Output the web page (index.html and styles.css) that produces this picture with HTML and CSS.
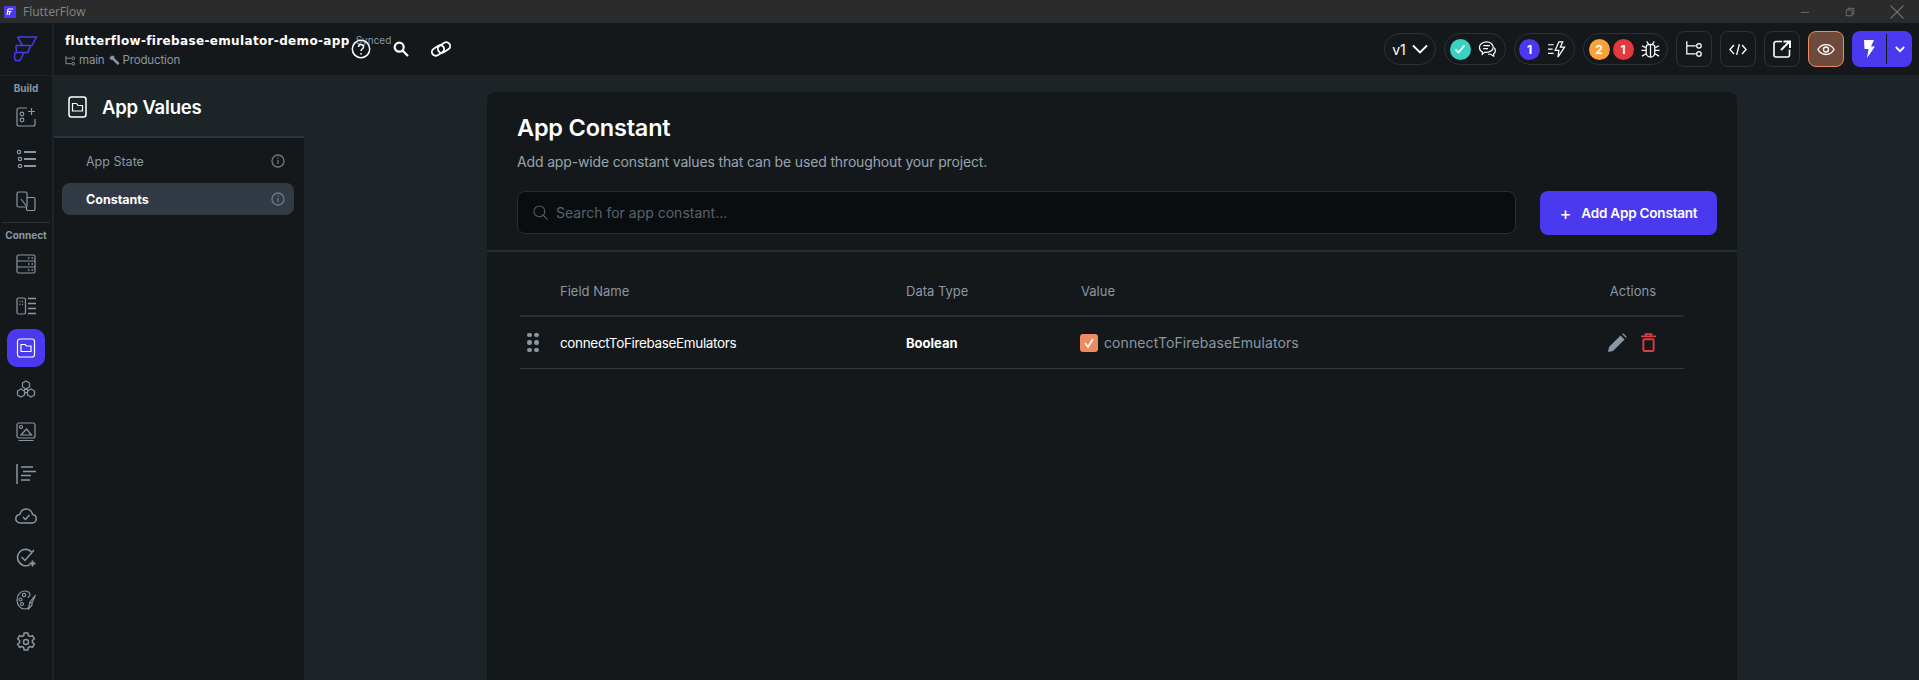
FILE: index.html
```html
<!DOCTYPE html>
<html lang="en">
<head>
  <meta charset="UTF-8">
  <title>FlutterFlow</title>
  <link rel="stylesheet" href="styles.css">
</head>
<body>
  <div class="titlebar">
    <svg class="app-mark" viewBox="0 0 12 12"><rect width="12" height="12" rx="1" fill="#4b39ef"/><path d="M4 3h5M3.500 5.500h4M4 3 3 9M6 5.500 5 9" stroke="#fff" stroke-width="1.200" fill="none"/></svg>
    <span class="app-name">FlutterFlow</span>
    <div class="window-btns">
      <svg viewBox="0 0 12 12"><path d="M1 6.500h10" stroke="#777" fill="none"/></svg>
      <svg viewBox="0 0 12 12"><path d="M1.500 3.500h7v7h-7zM3.500 3.500v-2h7v7h-2" stroke="#777" fill="none"/></svg>
      <svg class="close-x" viewBox="0 0 12 12"><path d="M.5.500l11 11M11.500.500l-11 11" stroke="#777" fill="none"/></svg>
    </div>
  </div>

  <header class="topbar">
    <div class="logo-cell">
      <svg viewBox="0 0 26 26" width="26" height="26" fill="none" stroke="#4b39ef" stroke-width="1.500" stroke-linejoin="round"><path d="M5.500 1h19l-4.500 8.500h-9.500l-5-8.500M4 9.500h14.500l-2.500 7H4.500l-.5-7M3 16.500h9l-4 8H3.500l-1-3 .5-5"/></svg>
    </div>
    <div class="project">
      <div class="project-name-row">
        <span class="project-name">flutterflow-firebase-emulator-demo-app</span>
        <span class="synced">Synced</span>
      </div>
      <div class="project-meta">
        <svg viewBox="0 0 12 12" width="11" height="11" fill="none" stroke="#8b97a2"><path d="M1 1v8.500h6M1 3.500h6"/><circle cx="9" cy="3.500" r="1.500"/><circle cx="9" cy="9.500" r="1.500"/></svg>
        <span>main</span>
        <svg class="wrench" viewBox="0 0 12 12" width="11" height="11"><path d="M.5 3 3 .5l2.500.500.500 2.500 5.500 5.500-2 2L4 5.500 1.500 5z" fill="#8b97a2"/></svg>
        <span>Production</span>
      </div>
    </div>
    <div class="project-tools">
      <svg viewBox="0 0 20 20" width="20" height="20" fill="none" stroke="#fff" stroke-width="1.500"><circle cx="10" cy="10" r="8.700"/><path d="M7.500 8c0-3.200 5-3.200 5 0 0 2-2.500 2-2.500 4"/><path d="M10 14v1.500"/></svg>
      <svg viewBox="0 0 16 16" width="16" height="16" fill="none" stroke="#fff" stroke-width="2.200"><circle cx="6.200" cy="6.200" r="4.500"/><path d="M9.500 9.500l5.500 5.500"/></svg>
      <svg viewBox="0 0 20 20" width="20" height="20" fill="none" stroke="#fff" stroke-width="1.800"><rect x=".5" y="7.700" width="13" height="7.600" rx="3.800" transform="rotate(-32 7 11.500)"/><rect x="6.500" y="4.700" width="13" height="7.600" rx="3.800" transform="rotate(-32 13 8.500)"/></svg>
    </div>

    <div class="top-actions">
      <div class="pill pill-version">v1
        <svg viewBox="0 0 16 10" width="16" height="10" fill="none" stroke="#fff" stroke-width="1.800"><path d="M1 1.500l7 7 7-7"/></svg>
      </div>
      <div class="pill pill-sync">
        <span class="dot dot-teal"><svg viewBox="0 0 12 12" width="12" height="12" fill="none" stroke="#fff" stroke-width="1.800"><path d="M1.500 6.500l3 3 6-7"/></svg></span>
        <svg viewBox="0 0 20 20" width="19" height="19" fill="none" stroke="#fff" stroke-width="1.300"><path d="M9 2c4 0 7 2.500 7 5.500S13 13 9 13H7l-2.500 2v-2.500C2.500 11.500 1.500 9.500 1.500 7.500 1.500 4.500 5 2 9 2z"/><path d="M5.500 6h7M5.500 9h5"/><path d="M17 8c1.500 1.500 2 5-.5 6.500V17l-3-2h-3"/></svg>
      </div>
      <div class="pill pill-actions">
        <span class="dot dot-blue">1</span>
        <svg viewBox="0 0 20 20" width="19" height="19" fill="none" stroke="#fff" stroke-width="1.300"><path d="M1 5h6M1 9.500h5M1 14h6"/><path d="M12.500 2 8.500 11h4l-1 7 7-10.500h-4.500l2.500-5.500z"/></svg>
      </div>
      <div class="pill pill-bugs">
        <span class="dot dot-orange">2</span>
        <span class="dot dot-red">1</span>
        <svg viewBox="0 0 20 20" width="19" height="19" fill="none" stroke="#fff" stroke-width="1.300"><path d="M5.500 7c0-1.500 2-2.500 4.500-2.500S14.500 5.500 14.500 7v6.500c0 2.500-2 4.500-4.500 4.500s-4.500-2-4.500-4.500z"/><path d="M10 5v13M6 1.500l2 3M14 1.500l-2 3M1 6l4 2M19 6l-4 2M.5 11h5M19.500 11h-5M1 17l4.500-2.500M19 17l-4.500-2.500"/></svg>
      </div>
      <div class="square-btn">
        <svg viewBox="0 0 20 20" width="18" height="18" fill="none" stroke="#fff" stroke-width="1.400"><path d="M2 1.500v14h10M2 6.500h10"/><circle cx="15.500" cy="6.500" r="2.500"/><circle cx="15.500" cy="15.500" r="2.500"/></svg>
      </div>
      <div class="square-btn">
        <svg viewBox="0 0 20 14" width="18" height="13" fill="none" stroke="#fff" stroke-width="1.500"><path d="M5.500 2 1 7l4.500 5M14.500 2 19 7l-4.500 5M11.500 1l-3 12"/></svg>
      </div>
      <div class="square-btn">
        <svg viewBox="0 0 18 18" width="18" height="18" fill="none" stroke="#fff" stroke-width="1.600"><path d="M9 1.500H3a2 2 0 0 0-2 2V15a2 2 0 0 0 2 2h11.500a2 2 0 0 0 2-2V9.500"/><path d="M8 10 16 2" stroke-width="2"/><path d="M10.500 1.500h6.500V8" stroke-width="2"/></svg>
      </div>
      <div class="square-btn square-preview">
        <svg viewBox="0 0 20 14" width="18" height="13" fill="none" stroke="#fff" stroke-width="1.500"><path d="M1 7c2-3.500 5-5.500 9-5.500s7 2 9 5.500c-2 3.500-5 5.500-9 5.500S3 10.500 1 7z"/><circle cx="10" cy="7" r="2.800"/></svg>
      </div>
      <div class="run-btn">
        <span class="run-main"><svg viewBox="0 0 12 18" width="12" height="18"><path d="M1 0h10L8 6.500h4L4 18l1.500-9H1.500z" fill="#fff"/></svg></span>
        <span class="run-caret"><svg viewBox="0 0 12 8" width="10" height="7" fill="none" stroke="#fff" stroke-width="2.200"><path d="M1 1l5 5 5-5"/></svg></span>
      </div>
    </div>
  </header>

  <div class="workspace">
    <nav class="rail">
      <div class="rail-label">Build</div>
      <div class="rail-item">
        <svg viewBox="0 0 20 20"><path d="M11 1H3a2 2 0 0 0-2 2v14a2 2 0 0 0 2 2h14a2 2 0 0 0 2-2v-5M15.500 1v7M12 4.500h7"/><circle cx="6" cy="7" r="1.800"/><circle cx="6" cy="13" r="1.800"/></svg>
      </div>
      <div class="rail-item">
        <svg viewBox="0 0 20 20"><circle cx="3" cy="3" r="1.700"/><circle cx="4" cy="10" r="1.700"/><circle cx="4" cy="17" r="1.700"/><path d="M8 3h12M8 10h12M8 17h12" stroke-width="1.800"/></svg>
      </div>
      <div class="rail-item">
        <svg viewBox="0 0 20 20"><rect x="1" y="1" width="10" height="15" rx="1.500"/><path d="M11 6.500h6.500A1.500 1.500 0 0 1 19 8v10a1.500 1.500 0 0 1-1.500 1.500H12a1.500 1.500 0 0 1-1.500-1.500v-2M5 8l5 6.500"/></svg>
      </div>
      <div class="rail-rule"></div>
      <div class="rail-label">Connect</div>
      <div class="rail-item">
        <svg viewBox="0 0 20 20"><rect x="1" y="1" width="18" height="18" rx="1.500"/><path d="M1 7h18M1 13h18"/><path d="M12 4h1.500M15.500 4H17M12 10h1.500M15.500 10H17M12 16h1.500M15.500 16H17" stroke-width="1.600"/></svg>
      </div>
      <div class="rail-item">
        <svg viewBox="0 0 20 20"><rect x="1" y="2" width="8.500" height="16" rx="1.500"/><path d="M3.500 5.500h1M6 5.500h1M3.500 8.500h1M6 8.500h1M12 2.500h8M12 7.500h8M12 12.500h8M12 17.500h8" stroke-width="1.600"/></svg>
      </div>
      <div class="rail-item rail-item-active">
        <svg viewBox="0 0 20 20"><rect x="1.500" y="1" width="17" height="18" rx="2.500"/><path d="M5 6.500h4l1.500 1.500H15v5.500H5z"/></svg>
      </div>
      <div class="rail-item">
        <svg viewBox="0 0 20 20"><path d="M10 1l3.500 2v4L10 9 6.500 7V3zM5 9l3.500 2v4L5 17l-3.500-2v-4zM15 9l3.500 2v4L15 17l-3.500-2v-4z"/><circle cx="10" cy="11" r="1.800"/></svg>
      </div>
      <div class="rail-item">
        <svg viewBox="0 0 20 20"><rect x="1" y="1" width="18" height="15" rx="2"/><circle cx="5" cy="5" r="1.500"/><path d="M5 13l5.500-6 5 6zM2.500 18.500h15" /></svg>
      </div>
      <div class="rail-item">
        <svg viewBox="0 0 20 20"><path d="M1 0v20M5 3h12M7 7.500h13M5 11.500h10M5 16h9" stroke-width="1.500"/></svg>
      </div>
      <div class="rail-item">
        <svg viewBox="0 0 22 16" class="wide"><path d="M5.500 15C2.500 15 .8 13 .8 10.800c0-2.200 1.700-4 4-4.200C5.800 3 8.300 1 11 1c3.500 0 6 2.500 6.500 5.500 2.200.2 3.700 2 3.700 4.200 0 2.400-1.700 4.300-4.200 4.300z" stroke-width="1.500"/><path d="M8 9l2.500 2.500L14.500 7" stroke-width="1.500"/></svg>
      </div>
      <div class="rail-item">
        <svg viewBox="0 0 20 20"><path d="M15.500 4C14 2.200 12 1.200 9.500 1.200A8.300 8.300 0 1 0 14 16.700" stroke-width="1.500"/><path d="M5.500 9l3.500 3.500L18 2" stroke-width="1.500"/><path d="M16.500 12.500v6M13.500 15.500h6" stroke-width="1.800"/></svg>
      </div>
      <div class="rail-item">
        <svg viewBox="0 0 20 20"><path d="M13 17c-1 1.500-2.500 2-4.500 2C4.500 19 1 15 1 10S4.500 1 8.500 1c3.500 0 6 2 5.500 4-.500 1.500-2 1.500-2 3" stroke-width="1.200"/><circle cx="8" cy="5" r="1.700"/><circle cx="4.500" cy="9.500" r="1.500"/><circle cx="6" cy="14" r="1.500"/><path d="M19.500 5 16 13l-2-1zM14 12l-1.500 7 3.500-4 0-2" stroke-width="1.200"/></svg>
      </div>
      <div class="rail-item">
        <svg viewBox="0 0 20 20"><path d="M8.200 1h3.600l.5 2.500 1.700 1 2.500-.8 1.800 3.100-1.900 1.700v2l1.900 1.700-1.800 3.100-2.500-.8-1.700 1-.5 2.500H8.200l-.5-2.500-1.700-1-2.500.8-1.800-3.100 1.900-1.700v-2L1.700 6.800l1.800-3.100 2.500.8 1.700-1z" stroke-width="1.500"/><circle cx="10" cy="10" r="2.500" stroke-width="1.500"/></svg>
      </div>
    </nav>

    <aside class="sidebar">
      <div class="sidebar-head">
        <svg viewBox="0 0 19 22" width="19" height="22" fill="none" stroke="#fff" stroke-width="1.500"><rect x="1" y="1" width="17" height="20" rx="2.500"/><path d="M4.500 7.500h4L10 9.500h4.500v5.500h-10z" stroke-width="1.200"/></svg>
        <span>App Values</span>
      </div>
      <div class="side-link">App State
        <svg class="info" viewBox="0 0 14 14"><circle cx="7" cy="7" r="6"/><path d="M7 6v4M7 3.500v1.300"/></svg>
      </div>
      <div class="side-link side-link-active">Constants
        <svg class="info" viewBox="0 0 14 14"><circle cx="7" cy="7" r="6"/><path d="M7 6v4M7 3.500v1.300"/></svg>
      </div>
    </aside>

    <main class="main">
      <section class="card">
        <div class="card-top">
          <h1>App Constant</h1>
          <p>Add app-wide constant values that can be used throughout your project.</p>
          <div class="search-row">
            <div class="search">
              <svg viewBox="0 0 16 16" width="15" height="15" fill="none" stroke="#57636c" stroke-width="1.100"><circle cx="6.800" cy="6.800" r="5.800"/><path d="M11 11l4.500 4.500"/></svg>
              <span>Search for app constant...</span>
            </div>
            <div class="add-btn"><span class="plus">+</span>Add App Constant</div>
          </div>
        </div>
        <div class="table">
          <div class="row row-head">
            <span></span>
            <span>Field Name</span>
            <span>Data Type</span>
            <span>Value</span>
            <span class="actions-head">Actions</span>
          </div>
          <div class="row row-body">
            <span class="grip"><i></i><i></i><i></i><i></i><i></i><i></i></span>
            <span class="field-name">connectToFirebaseEmulators</span>
            <span class="data-type">Boolean</span>
            <span class="value">
              <span class="check"><svg viewBox="0 0 12 12" width="12" height="12" fill="none" stroke="#fff" stroke-width="1.600"><path d="M2 6l3 4 5-8"/></svg></span>
              connectToFirebaseEmulators
            </span>
            <span class="row-actions">
              <svg viewBox="0 0 20 20" width="20" height="20"><path d="M1 19l1-5L13.500 2.500l4 4L6 18zM15 1l1.500-.500 3 3L19 5z" fill="#8b97a2"/></svg>
              <svg viewBox="0 0 16 20" width="15" height="19" fill="none" stroke="#e0393e" stroke-width="2"><path d="M0 3.500h16M5 3.500V1h6v2.500"/><rect x="2.500" y="6.500" width="11" height="12.500" rx="1"/></svg>
            </span>
          </div>
        </div>
      </section>
    </main>
  </div>
</body>
</html>
```

FILE: styles.css
```css
* {
  box-sizing: border-box;
}

html, body {
  margin: 0;
  height: 100%;
  overflow: hidden;
}

body {
  display: flex;
  flex-direction: column;
  background: #1d2428;
  color: #fff;
  font-family: 'Inter', 'Liberation Sans', sans-serif;
}

/* window chrome */
.titlebar {
  height: 23px;
  background: #2b2b2b;
  display: flex;
  align-items: center;
  padding-left: 4px;
  flex-shrink: 0;
}

.app-mark {
  width: 12px;
  height: 12px;
}

.app-name {
  margin-left: 7px;
  font-family: 'Open Sans', sans-serif;
  font-size: 12px;
  color: #858585;
}

.window-btns {
  margin-left: auto;
  display: flex;
  align-items: center;
  gap: 35px;
  padding-right: 15px;
}

.window-btns svg {
  width: 10px;
  height: 10px;
}

.window-btns .close-x {
  width: 14px;
  height: 14px;
}

/* top header */
.topbar {
  height: 53px;
  background: #14181b;
  display: flex;
  align-items: center;
  flex-shrink: 0;
  border-bottom: 1px solid #1d2428;
}

.logo-cell {
  width: 54px;
  height: 100%;
  border-right: 2px solid #1d2428;
  display: flex;
  align-items: center;
  justify-content: center;
  padding-right: 3px;
}

.project {
  width: 286px;
  margin: 3px 0 0 11px;
}

.project-name-row {
  display: flex;
  align-items: center;
  gap: 6px;
  white-space: nowrap;
}

.project-name {
  font-family: 'DejaVu Sans', sans-serif;
  font-weight: 700;
  font-size: 12px;
  letter-spacing: .35px;
}

.synced {
  font-size: 10px;
  color: #8b97a2;
  margin-top: -2px;
}

.project-meta {
  display: flex;
  align-items: center;
  gap: 3px;
  margin-top: 5px;
  font-size: 11.500px;
  letter-spacing: -.15px;
  color: #8b97a2;
}

.project-meta .wrench {
  margin-left: 1px;
}

.project-tools {
  display: flex;
  align-items: center;
  gap: 22px;
}

.top-actions {
  margin-left: auto;
  display: flex;
  align-items: center;
  gap: 8px;
  padding-right: 7px;
}

.pill {
  height: 32px;
  border: 1px solid #2a3137;
  border-radius: 16px;
  display: flex;
  align-items: center;
  justify-content: center;
  gap: 7px;
  font-size: 14px;
}

.pill-version { width: 52px; gap: 6px; }
.pill-sync { width: 62px; padding-right: 4px; }
.pill-actions { width: 61px; padding-right: 4px; }
.pill-bugs { width: 85px; gap: 3px; padding-right: 3px; }
.pill-bugs svg { margin-left: 4px; }

.dot {
  width: 21px;
  height: 21px;
  border-radius: 50%;
  display: flex;
  align-items: center;
  justify-content: center;
  font-size: 12px;
  font-weight: 700;
}

.dot-teal { background: #39d2c0; }
.dot-blue { background: #4b39ef; }
.dot-orange { background: #f9a13a; }
.dot-red { background: #e0393e; }

.square-btn {
  width: 36px;
  height: 36px;
  border: 1px solid #2a3137;
  border-radius: 8px;
  display: flex;
  align-items: center;
  justify-content: center;
}

.square-preview {
  background: #6e4a3c;
  border: 1px solid #ee8b60;
}

.run-btn {
  width: 60px;
  height: 36px;
  background: #4b39ef;
  border-radius: 8px;
  display: flex;
  align-items: center;
}

.run-main {
  width: 35px;
  height: 30px;
  border-right: 1px solid #14181b;
  display: flex;
  align-items: center;
  justify-content: center;
}

.run-caret {
  flex: 1;
  display: flex;
  justify-content: center;
}

/* left icon rail */
.workspace {
  flex: 1;
  display: flex;
  min-height: 0;
}

.rail {
  width: 54px;
  background: #14181b;
  border-right: 2px solid #1d2428;
  padding-top: 5px;
  flex-shrink: 0;
}

.rail-label {
  height: 14px;
  line-height: 14px;
  text-align: center;
  font-size: 10px;
  font-weight: 700;
  color: #8b97a2;
}

.rail-item {
  width: 38px;
  height: 42px;
  margin-left: 7px;
  display: flex;
  align-items: center;
  justify-content: center;
}

.rail-label + .rail-item {
  margin-top: 1px;
}

.rail-item svg {
  width: 20px;
  height: 20px;
  fill: none;
  stroke: #8b97a2;
  stroke-width: 1.200;
}

.rail-item svg.wide {
  width: 22px;
  height: 16px;
}

.rail-item-active {
  height: 38px;
  margin-top: 2px;
  margin-bottom: 2px;
  background: #4b39ef;
  border-radius: 10px;
}

.rail-item-active svg {
  stroke: #fff;
}

.rail-rule {
  height: 1px;
  margin: 0 2px 5px;
  background: #2a3137;
}

/* secondary sidebar */
.sidebar {
  width: 250px;
  background: #14181b;
  flex-shrink: 0;
}

.sidebar-head {
  height: 62px;
  padding: 2px 0 0 14px;
  background: #1d2428;
  border-bottom: 2px solid #2d3440;
  display: flex;
  align-items: center;
  gap: 15px;
  font-size: 18.500px;
  font-weight: 600;
  letter-spacing: -.2px;
}

.side-link {
  height: 32px;
  margin: 7px 10px 0 8px;
  padding: 0 9px 0 24px;
  border-radius: 8px;
  display: flex;
  align-items: center;
  justify-content: space-between;
  font-size: 12.500px;
  color: #8b97a2;
}

.side-link-active {
  margin-top: 6px;
  background: #323a46;
  color: #fff;
  font-weight: 700;
}

.info {
  width: 14px;
  height: 14px;
  fill: none;
  stroke: #6e7a85;
  stroke-width: 1.300;
}

/* main card */
.main {
  flex: 1;
  min-width: 0;
  padding: 16px 182px 0 183px;
}

.card {
  height: 100%;
  background: #14181b;
  border-radius: 8px 8px 0 0;
}

.card-top {
  padding: 20px 20px 0 30px;
  height: 160px;
  border-bottom: 2px solid #262d34;
}

.card h1 {
  margin: 0;
  font-size: 23.500px;
  line-height: 32px;
  font-weight: 600;
  letter-spacing: -.2px;
}

.card p {
  margin: 8px 0 0;
  font-size: 14px;
  line-height: 20px;
  letter-spacing: -.15px;
  color: #9aa4ad;
}

.search-row {
  display: flex;
  gap: 24px;
  margin-top: 19px;
}

.search {
  flex: 1;
  height: 43px;
  background: #0a0d0f;
  border: 1px solid #262d34;
  border-radius: 8px;
  display: flex;
  align-items: center;
  gap: 8px;
  padding-left: 15px;
  font-size: 14px;
  color: #57636c;
}

.add-btn {
  width: 177px;
  height: 44px;
  background: #4b39ef;
  border-radius: 8px;
  display: flex;
  align-items: center;
  justify-content: center;
  font-size: 13.500px;
  font-weight: 600;
  letter-spacing: -.2px;
}

.plus {
  font-size: 18px;
  font-weight: 400;
  margin-right: 10px;
}

.table {
  margin: 0 53px 0 33px;
}

.row {
  display: grid;
  grid-template-columns: 40px 346px 175px 1fr 100px;
  align-items: center;
  font-size: 13.500px;
}

.row-head {
  height: 65px;
  padding-top: 15px;
  font-size: 13px;
  color: #8b97a2;
  border-bottom: 2px solid #262d34;
}

.actions-head {
  text-align: right;
  padding-right: 28px;
}

.row-body {
  height: 52px;
  border-bottom: 1px solid #323a46;
}

.field-name {
  letter-spacing: -.35px;
}

.grip {
  display: grid;
  grid-template-columns: 4px 4px;
  gap: 3px;
  margin-left: 7px;
}

.grip i {
  width: 4.500px;
  height: 4.500px;
  border-radius: 50%;
  background: #8b97a2;
}

.data-type {
  font-weight: 700;
  font-size: 13px;
}

.value {
  display: flex;
  align-items: center;
  gap: 6px;
  margin-left: -1px;
  font-size: 14px;
  letter-spacing: .1px;
  color: #8b97a2;
}

.check {
  width: 18px;
  height: 18px;
  background: #ee8b60;
  border-radius: 3px;
  display: flex;
  align-items: center;
  justify-content: center;
}

.row-actions {
  display: flex;
  align-items: center;
  justify-content: flex-end;
  gap: 14px;
  padding-right: 28px;
}
```
